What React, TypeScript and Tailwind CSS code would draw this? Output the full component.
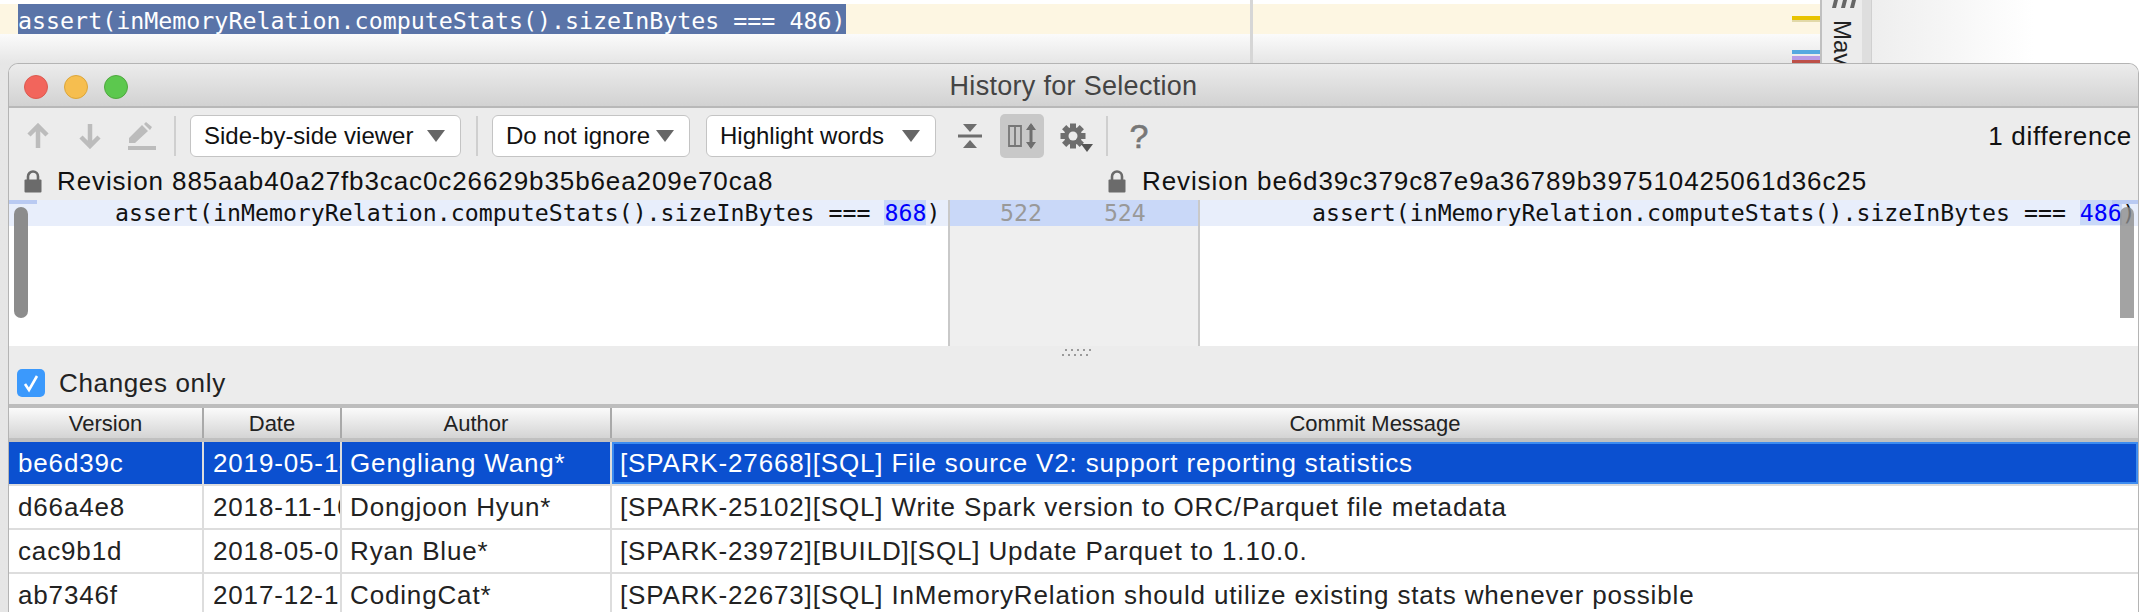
const sans = "font-['Liberation_Sans',Arial,sans-serif]";
const mono = "font-['DejaVu_Sans_Mono',monospace]";

const rows = [
  { version: "be6d39c", date: "2019-05-14", author: "Gengliang Wang*", message: "[SPARK-27668][SQL] File source V2: support reporting statistics" },
  { version: "d66a4e8", date: "2018-11-10", author: "Dongjoon Hyun*", message: "[SPARK-25102][SQL] Write Spark version to ORC/Parquet file metadata" },
  { version: "cac9b1d", date: "2018-05-09", author: "Ryan Blue*", message: "[SPARK-23972][BUILD][SQL] Update Parquet to 1.10.0." },
  { version: "ab7346f", date: "2017-12-19", author: "CodingCat*", message: "[SPARK-22673][SQL] InMemoryRelation should utilize existing stats whenever possible" },
];

function Combo({ label, width }: { label: string; width: string }) {
  return (
    <div className={`${width} flex h-[42px] shrink-0 items-center justify-between rounded-[6px] border border-[#c4c4c4] bg-white pl-[13px] pr-[14px] text-[24px] text-[#111]`}>
      <span>{label}</span>
      <svg width="20" height="14" viewBox="0 0 20 14">
        <path d="M1 1h18l-9 12z" fill="#666" />
      </svg>
    </div>
  );
}

function Separator() {
  return <div className="h-[40px] w-[2px] shrink-0 bg-[#cfcfcf]" />;
}

function Lock({ className }: { className: string }) {
  return (
    <svg className={className} width="18" height="23" viewBox="0 0 18 23">
      <path d="M4 10V6.5a5 5 0 0 1 10 0V10" fill="none" stroke="#6b6b6b" strokeWidth="2.6" />
      <rect x="0.5" y="9.5" width="17" height="13" rx="1" fill="#6b6b6b" />
    </svg>
  );
}

function Gear() {
  const teeth = [0, 45, 90, 135];
  return (
    <svg width="28" height="28" viewBox="0 0 28 28">
      {teeth.map((a) => (
        <rect key={a} x="11" y="1.5" width="6" height="25" fill="#6e6e6e" transform={`rotate(${a} 14 14)`} />
      ))}
      <circle cx="14" cy="14" r="9" fill="#6e6e6e" />
      <circle cx="14" cy="14" r="4.5" fill="#ececec" />
    </svg>
  );
}

export default function App() {
  return (
    <div className={`${sans} relative flex h-[612px] w-[2142px] overflow-hidden bg-white`}>
      {/* editor behind the dialog */}
      <div className="relative flex w-[1820px] shrink-0 flex-col">
        <div className="h-[4px] bg-white" />
        <div className={`${mono} flex h-[30px] overflow-hidden bg-[#fdf6e2] pl-[18px] text-[23.3px] text-white`}>
          <span className="h-[30px] bg-[#5a74a8] leading-[33px]">assert(inMemoryRelation.computeStats().sizeInBytes === 486)</span>
        </div>
        <div className="flex-1 bg-gradient-to-b from-[#fbfbfb] to-[#e6e6e6] to-[5%]" />
        <div className="absolute left-[1250px] top-0 h-[63px] w-[3px] bg-[#d6d6d6]" />
        <div className="absolute left-[1792px] top-[16px] h-[4px] w-[28px] bg-[#e8c300]" />
        <div className="absolute left-[1792px] top-[20px] h-[2px] w-[28px] bg-[#e2d9a8]" />
        <div className="absolute left-[1792px] top-[50px] h-[4px] w-[28px] bg-[#55a9e0]" />
        <div className="absolute left-[1792px] top-[56px] h-[4px] w-[28px] bg-[#b79be6]" />
        <div className="absolute left-[1792px] top-[60px] h-[4px] w-[28px] bg-[#bd5048]" />
      </div>
      <div className="flex w-[42px] shrink-0 flex-col items-center border-l-2 border-[#c0c0c0] bg-[#ececec]">
        <svg className="mt-0 shrink-0" width="28" height="8" viewBox="0 0 28 8">
          <path d="M4 8l2-8h4l-2 8zM13 8l2-8h4l-2 8zM22 8l2-8h4l-2 8z" fill="#666" />
        </svg>
        <span className="mt-[12px] text-[24px] leading-none text-[#222] [writing-mode:vertical-rl]">Mav</span>
      </div>
      <div className="w-[10px] shrink-0 border-r border-[#d0d0d0] bg-[#dedede]" />
      <div className="flex-1 bg-gradient-to-r from-[#eeeeee] to-white to-[60%]" />

      {/* history dialog */}
      <div className="absolute left-[8px] top-[63px] flex h-[560px] w-[2131px] flex-col overflow-hidden rounded-t-[10px] border-x border-t border-[#b4b4b4] bg-[#ececec]">
        <div className="relative flex h-[44px] shrink-0 items-center justify-center border-b-2 border-[#b8b8b8] bg-gradient-to-b from-[#ececec] to-[#d2d2d2] pt-[2px]">
          <div className="absolute left-[15px] top-[11px] flex gap-[16px]">
            <div className="h-[24px] w-[24px] rounded-full border border-[#dc5a50] bg-[#f2655c]" />
            <div className="h-[24px] w-[24px] rounded-full border border-[#dca63a] bg-[#f6be4f]" />
            <div className="h-[24px] w-[24px] rounded-full border border-[#4fa83f] bg-[#5cc84e]" />
          </div>
          <span className="text-[27px] tracking-[0.3px] text-[#444]">History for Selection</span>
        </div>

        <div className="flex h-[56px] shrink-0 items-center pl-[3px] pr-[6px]">
          <div className="flex w-[52px] shrink-0 justify-center">
            <svg width="22" height="26" viewBox="0 0 22 26">
              <path d="M11 25V3M2 12l9-9 9 9" fill="none" stroke="#bcbcbc" strokeWidth="4.5" />
            </svg>
          </div>
          <div className="flex w-[52px] shrink-0 justify-center">
            <svg width="22" height="26" viewBox="0 0 22 26">
              <path d="M11 1v22M2 14l9 9 9-9" fill="none" stroke="#bcbcbc" strokeWidth="4.5" />
            </svg>
          </div>
          <div className="flex w-[52px] shrink-0 justify-center">
            <svg width="30" height="28" viewBox="0 0 30 28">
              <path d="M2 16L15 3l6 6L8 21H2zM17 2l2-2 6 5-2 3z" fill="#bcbcbc" />
              <rect x="1" y="24" width="28" height="4" fill="#bcbcbc" />
            </svg>
          </div>
          <div className="ml-[6px]"><Separator /></div>
          <div className="ml-[14px]"><Combo label="Side-by-side viewer" width="w-[271px]" /></div>
          <div className="ml-[15px]"><Separator /></div>
          <div className="ml-[14px]"><Combo label="Do not ignore" width="w-[198px]" /></div>
          <div className="ml-[16px]"><Combo label="Highlight words" width="w-[230px]" /></div>
          <div className="ml-[12px] flex h-[44px] w-[44px] shrink-0 items-center justify-center">
            <svg width="24" height="24" viewBox="0 0 24 24">
              <path d="M5 0h14l-7 8zM5 24h14l-7-8z" fill="#6e6e6e" />
              <rect y="10.5" width="24" height="3" fill="#6e6e6e" />
            </svg>
          </div>
          <div className="ml-[8px] flex h-[44px] w-[44px] shrink-0 items-center justify-center rounded-[5px] bg-[#c8c8c8]">
            <svg width="28" height="28" viewBox="0 0 28 28">
              <path d="M1 4h12v20H1zM7 4v20" fill="none" stroke="#777" strokeWidth="1.8" />
              <path d="M23 3v22" stroke="#6e6e6e" strokeWidth="3" />
              <path d="M18 8l5-7 5 7zM18 20l5 7 5-7z" fill="#6e6e6e" />
            </svg>
          </div>
          <div className="relative ml-[7px] flex h-[44px] w-[44px] shrink-0 items-center justify-center">
            <Gear />
            <svg className="absolute left-[29px] top-[30px]" width="14" height="8" viewBox="0 0 14 8">
              <path d="M1 0h12l-6 8z" fill="#555" />
            </svg>
          </div>
          <div className="ml-[11px]"><Separator /></div>
          <div className="ml-[9px] flex w-[44px] shrink-0 justify-center text-[34px] text-[#777] [-webkit-text-stroke:0.6px_#777]">?</div>
          <span className="ml-auto text-[26px] tracking-[0.7px] text-[#111]">1 difference</span>
        </div>

        <div className="flex h-[36px] shrink-0 items-center pb-[2px] text-[26px] tracking-[0.9px] text-[#111]">
          <div className="flex w-[1099px] shrink-0 items-center">
            <Lock className="ml-[15px]" />
            <span className="ml-[15px]">Revision 885aab40a27fb3cac0c26629b35b6ea209e70ca8</span>
          </div>
          <Lock className="" />
          <span className="ml-[16px]">Revision be6d39c379c87e9a36789b397510425061d36c25</span>
        </div>

        {/* diff */}
        <div className={`${mono} flex h-[146px] shrink-0 bg-white text-[23.2px] leading-[25px] text-[#111]`}>
          <div className="relative w-[939px] shrink-0">
            <div className="h-[26px] whitespace-pre bg-[#e8eefb] pl-[106px] tracking-[0.03px]">
              assert(inMemoryRelation.computeStats().sizeInBytes === <span className="inline-block bg-[#c8d8f8] text-[#0000ff]">868</span>)
            </div>
            <div className="absolute left-0 top-0 h-[4px] w-[28px] bg-[#b9caf2]" />
            <div className="absolute left-[5px] top-[7px] h-[111px] w-[14px] rounded-full bg-[#8c8c8c]" />
          </div>
          <div className="w-[252px] shrink-0 border-x-2 border-[#c9c9c9] bg-[#efefef]">
            <div className="flex h-[26px] bg-[#c9d8f8] text-[#999]">
              <span className="ml-[50px]">522</span>
              <span className="ml-[62px]">524</span>
            </div>
          </div>
          <div className="relative flex-1">
            <div className="h-[26px] whitespace-pre bg-[#e8eefb] pl-[112px]">
              assert(inMemoryRelation.computeStats().sizeInBytes === <span className="inline-block bg-[#c8d8f8] text-[#0000ff]">486</span>)
            </div>
            <div className="absolute right-0 top-0 h-[4px] w-[26px] bg-[#b9caf2]" />
            <div className="absolute right-[4px] top-[7px] h-[111px] w-[14px] rounded-t-full bg-[#8c8c8c] opacity-80" />
          </div>
        </div>

        {/* changes only */}
        <div className="relative flex h-[58px] shrink-0 items-center pl-[8px] pt-[16px]">
          <svg className="absolute left-[1050px] top-[1px]" width="32" height="10" viewBox="0 0 32 10">
            {[0, 6, 12, 18, 24].map((x) => (
              <g key={x} fill="#9a9a9a">
                <rect x={x + 6} y="2" width="2" height="2" />
                <rect x={x + 3} y="7" width="2" height="2" />
              </g>
            ))}
          </svg>
          <div className="flex h-[28px] w-[28px] items-center justify-center rounded-[5px] bg-[#3b99fc]">
            <svg width="18" height="20" viewBox="0 0 18 20">
              <path d="M3 11l4 6L15 3" fill="none" stroke="white" strokeWidth="2.6" />
            </svg>
          </div>
          <span className="ml-[14px] text-[26px] tracking-[0.65px] text-[#222]">Changes only</span>
        </div>

        {/* commit table */}
        <div className="flex-1 border-t-4 border-[#bdbdbd] bg-white">
          <div className="grid h-[34px] grid-cols-[195px_138px_270px_1fr] border-b-4 border-[#c0c0c0] bg-gradient-to-b from-[#fbfbfb] to-[#d4d4d4] text-[22px] text-[#222]">
            {["Version", "Date", "Author", "Commit Message"].map((title, i) => (
              <div key={title} className={`flex h-[30px] items-center justify-center ${i < 3 ? "border-r-2 border-[#a9a9a9]" : ""}`}>
                {title}
              </div>
            ))}
          </div>
          {rows.map((row, i) => {
            const selected = i === 0;
            const cell = "flex h-[42px] items-center overflow-hidden whitespace-nowrap border-r-2 border-[#dddddd]";
            return (
              <div
                key={row.version}
                className={`grid h-[44px] grid-cols-[195px_138px_270px_1fr] border-b-2 border-[#dddddd] text-[26px] tracking-[0.85px] ${selected ? "bg-[#0b50d0] text-white" : "bg-white text-[#222]"}`}
              >
                <div className={`${cell} pl-[9px]`}>{row.version}</div>
                <div className={`${cell} pl-[9px]`}>{row.date}</div>
                <div className={`${cell} pl-[8px]`}>{row.author}</div>
                <div className={`flex h-[42px] items-center whitespace-nowrap ${selected ? "border-2 border-[#3d8cf0] pl-[6px]" : "pl-[8px]"}`}>{row.message}</div>
              </div>
            );
          })}
        </div>
      </div>
    </div>
  );
}
